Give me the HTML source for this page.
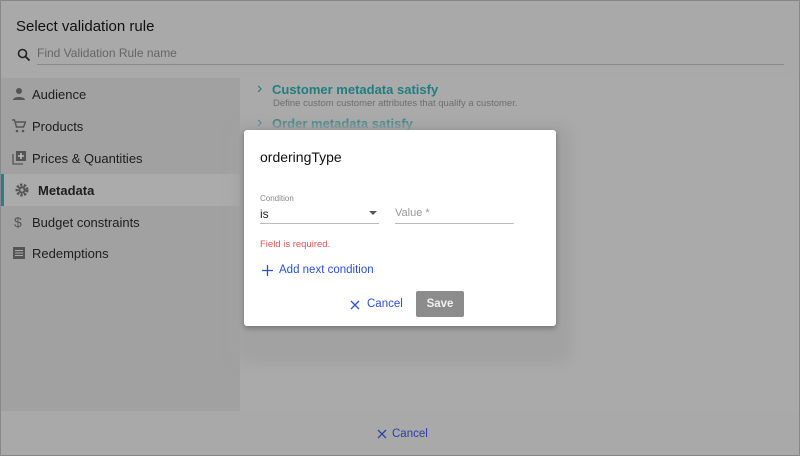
<!DOCTYPE html>
<html><head><meta charset="utf-8"><style>
*{margin:0;padding:0;box-sizing:border-box}
body{width:800px;height:456px;overflow:hidden;background:#a9a9a9;font-family:"Liberation Sans",sans-serif;position:relative}
.frame{position:absolute;left:0;top:0;width:800px;height:456px;border:1px solid #888}
.title{position:absolute;left:16px;top:18px;font-size:15px;color:#111}
.search{position:absolute;left:16px;top:46px;font-size:12px;color:#666}
.sline{position:absolute;left:37px;top:64px;width:747px;height:1px;background:#8a8a8a}
.side{position:absolute;left:1px;top:78px;width:239px;height:333px;background:#a1a1a1}
.item{position:absolute;left:0;width:239px;height:32px;font-size:13px;color:#1e1e1e;display:flex;align-items:center}
.item svg{position:absolute;left:11px}
.item span{position:absolute;left:31px}
.sel{background:#ababab;border-left:3px solid #2a7f7f;font-weight:bold}
.sel span{left:34px}
.main{position:absolute;left:240px;top:78px;width:559px;height:333px;background:#aaaaaa}
.h{position:absolute;font-size:13px;font-weight:bold;color:#1f7f80}
.d{position:absolute;font-size:9.5px;color:#6e6e6e}
.chev{position:absolute;font-size:16px;color:#1f7f80;line-height:16px}
.shadow{position:absolute;left:236px;top:124px;width:336px;height:240px;background:#a2a2a2;border-radius:12px;filter:blur(6px)}
.modal{position:absolute;left:244px;top:130px;width:312px;height:196px;background:#fff;border-radius:3px;box-shadow:0 2px 6px rgba(0,0,0,.3)}
.mt{position:absolute;left:16px;top:19px;font-size:14px;color:#111}
.lab{position:absolute;left:16px;top:64px;font-size:8px;color:#888}
.is{position:absolute;left:16px;top:77px;font-size:12px;color:#222}
.l1{position:absolute;left:16px;top:93px;width:119px;height:1px;background:#bbb}
.l2{position:absolute;left:151px;top:93px;width:119px;height:1px;background:#bbb}
.val{position:absolute;left:151px;top:77px;font-size:11px;color:#999}
.err{position:absolute;left:16px;top:109px;font-size:9.5px;color:#e05555}
.add{position:absolute;left:35px;top:134px;font-size:11.5px;color:#2a4fe0}
.canc{position:absolute;left:123px;top:168px;font-size:11.5px;color:#2a4fe0}
.save{position:absolute;left:172px;top:161px;width:48px;height:26px;background:#8c8c8c;color:#f0f0f0;font-size:11.5px;font-weight:bold;border-radius:2px;text-align:center;line-height:26px}
.bc{position:absolute;left:392px;top:428px;font-size:11.5px;color:#2a3fa8}
</style></head><body>
<div class="frame"></div>
<div class="title">Select validation rule</div>
<svg style="position:absolute;left:17px;top:48px" width="14" height="14" viewBox="0 0 14 14"><circle cx="5.5" cy="5.5" r="4" fill="none" stroke="#222" stroke-width="1.6"/><path d="M8.5 8.5L12.5 12.5" stroke="#222" stroke-width="1.8"/></svg>
<div class="search" style="left:37px">Find Validation Rule name</div>
<div class="sline"></div>
<div class="side">
 <div class="item" style="top:0px"><svg width="14" height="14" viewBox="0 0 14 14"><circle cx="7" cy="4" r="3" fill="#555"/><path d="M1 13c0-4 12-4 12 0z" fill="#555"/></svg><span>Audience</span></div>
 <div class="item" style="top:32px"><svg width="14" height="14" viewBox="0 0 14 14"><path d="M0 1h2.5l2 7h7l2-5H4" fill="none" stroke="#555" stroke-width="1.5"/><circle cx="5" cy="12" r="1.3" fill="#555"/><circle cx="11" cy="12" r="1.3" fill="#555"/></svg><span>Products</span></div>
 <div class="item" style="top:64px"><svg width="14" height="14" viewBox="0 0 14 14"><path d="M1 3v10h10" fill="none" stroke="#555" stroke-width="1.3"/><rect x="4" y="0" width="10" height="10" fill="#555"/><path d="M9 2v6M6 5h6" stroke="#bbb" stroke-width="1.6"/></svg><span>Prices &amp; Quantities</span></div>
 <div class="item sel" style="top:96px"><svg width="14" height="14" viewBox="0 0 14 14"><circle cx="7" cy="7" r="5" fill="none" stroke="#555" stroke-width="3" stroke-dasharray="2.2 1.4"/><circle cx="7" cy="7" r="3.5" fill="#555"/><circle cx="7" cy="7" r="1.6" fill="#ababab"/></svg><span>Metadata</span></div>
 <div class="item" style="top:128px"><span style="left:13px;color:#555;font-size:14px">$</span><span>Budget constraints</span></div>
 <div class="item" style="top:159px"><svg width="14" height="14" viewBox="0 0 14 14"><rect x="1" y="1" width="12" height="12" fill="#555"/><path d="M3 4.5h8M3 7h8M3 9.5h8" stroke="#aaa" stroke-width="1"/></svg><span>Redemptions</span></div>
</div>
<div class="main">
 <div class="chev" style="left:17px;top:3px">&#8250;</div>
 <div class="h" style="left:32px;top:4px">Customer metadata satisfy</div>
 <div class="d" style="left:33px;top:20px">Define custom customer attributes that qualify a customer.</div>
 <div class="chev" style="left:17px;top:37px">&#8250;</div>
 <div class="h" style="left:32px;top:38px">Order metadata satisfy</div>
</div>
<div class="shadow"></div>
<div class="modal">
 <div class="mt">orderingType</div>
 <div class="lab">Condition</div>
 <div class="is">is</div>
 <svg style="position:absolute;left:125px;top:81px" width="8" height="5"><path d="M0 0h8L4 4z" fill="#555"/></svg>
 <div class="l1"></div>
 <div class="val">Value *</div>
 <div class="l2"></div>
 <div class="err">Field is required.</div>
 <svg style="position:absolute;left:18px;top:135px" width="11" height="11"><path d="M5.5 0v11M0 5.5h11" stroke="#2a4fe0" stroke-width="1.3"/></svg>
 <div class="add">Add next condition</div>
 <svg style="position:absolute;left:106px;top:170px" width="10" height="10"><path d="M1 1l8 8M9 1l-8 8" stroke="#2a4fe0" stroke-width="1.3"/></svg>
 <div class="canc">Cancel</div>
 <div class="save">Save</div>
</div>
<svg style="position:absolute;left:377px;top:429px" width="10" height="10"><path d="M1 1l8 8M9 1l-8 8" stroke="#2a3fa8" stroke-width="1.3"/></svg>
<div class="bc">Cancel</div>
</body></html>
